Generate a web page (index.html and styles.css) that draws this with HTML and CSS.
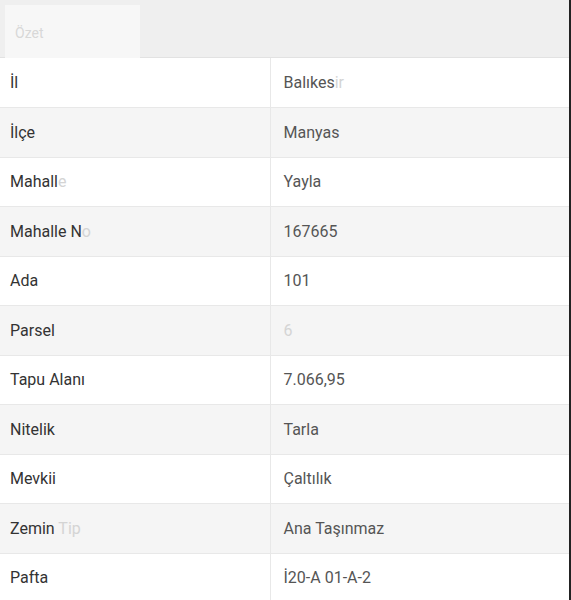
FILE: index.html
```html
<!DOCTYPE html>
<html lang="tr">
<head>
  <meta charset="UTF-8" />
  <meta name="viewport" content="width=device-width, initial-scale=1.0"/>
  <title>Tapu Özeti</title>
  <link rel="stylesheet" href="styles.css">
</head>
<body>

  <div class="panel">
    <div class="panel-head">
      <div class="tab">Özet</div>
    </div>

    <table class="info-table">
      <tr><td>İl</td><td>Balıkes<span class="faint">ir</span></td></tr>
      <tr><td>İlçe</td><td>Manyas</td></tr>
      <tr><td>Mahall<span class="faint">e</span></td><td>Yayla</td></tr>
      <tr><td>Mahalle N<span class="faint">o</span></td><td>167665</td></tr>
      <tr><td>Ada</td><td>101</td></tr>
      <tr><td>Parsel</td><td><span class="faint">6</span></td></tr>
      <tr><td>Tapu Alanı</td><td>7.066,95</td></tr>
      <tr><td>Nitelik</td><td>Tarla</td></tr>
      <tr><td>Mevkii</td><td>Çaltılık</td></tr>
      <tr><td>Zemin <span class="faint">Tip</span></td><td>Ana Taşınmaz</td></tr>
      <tr><td>Pafta</td><td>İ20-A 01-A-2</td></tr>
    </table>
  </div>

</body>
</html>
```

FILE: styles.css
```css
* {
  margin: 0;
  padding: 0;
  box-sizing: border-box;
}

body {
  font-family: Roboto, "Noto Sans", sans-serif;
  background: #ffffff;
  color: #333;
}

.panel {
  width: 571px;
  height: 600px;
  border-right: 2px solid #222;
  overflow: hidden;
}

.panel-head {
  height: 58px;
  background: #efefef;
  padding: 5px 0 0 5px;
  border-bottom: 1px solid #e2e2e2;
}

.tab {
  width: 135px;
  height: 53px;
  background: #f7f7f7;
  color: #d8d8d8;
  font-size: 14px;
  padding: 20px 0 0 10px;
}

.info-table {
  width: 100%;
  border-collapse: collapse;
  font-size: 16px;
}

.info-table tr {
  height: 49.5px;
}

.info-table tr:nth-child(even) {
  background: #f5f5f5;
}

.info-table td {
  border-bottom: 1px solid #e8e8e8;
  padding: 0 10px;
  vertical-align: middle;
}

.info-table td:first-child {
  width: 270px;
  border-right: 1px solid #e8e8e8;
  color: #333;
}

.info-table td:last-child {
  padding-left: 13px;
  color: #555;
}

.info-table tr:last-child td {
  border-bottom: 2px solid #bdbdbd;
}

.faint {
  color: #d4d4d4;
}
```
